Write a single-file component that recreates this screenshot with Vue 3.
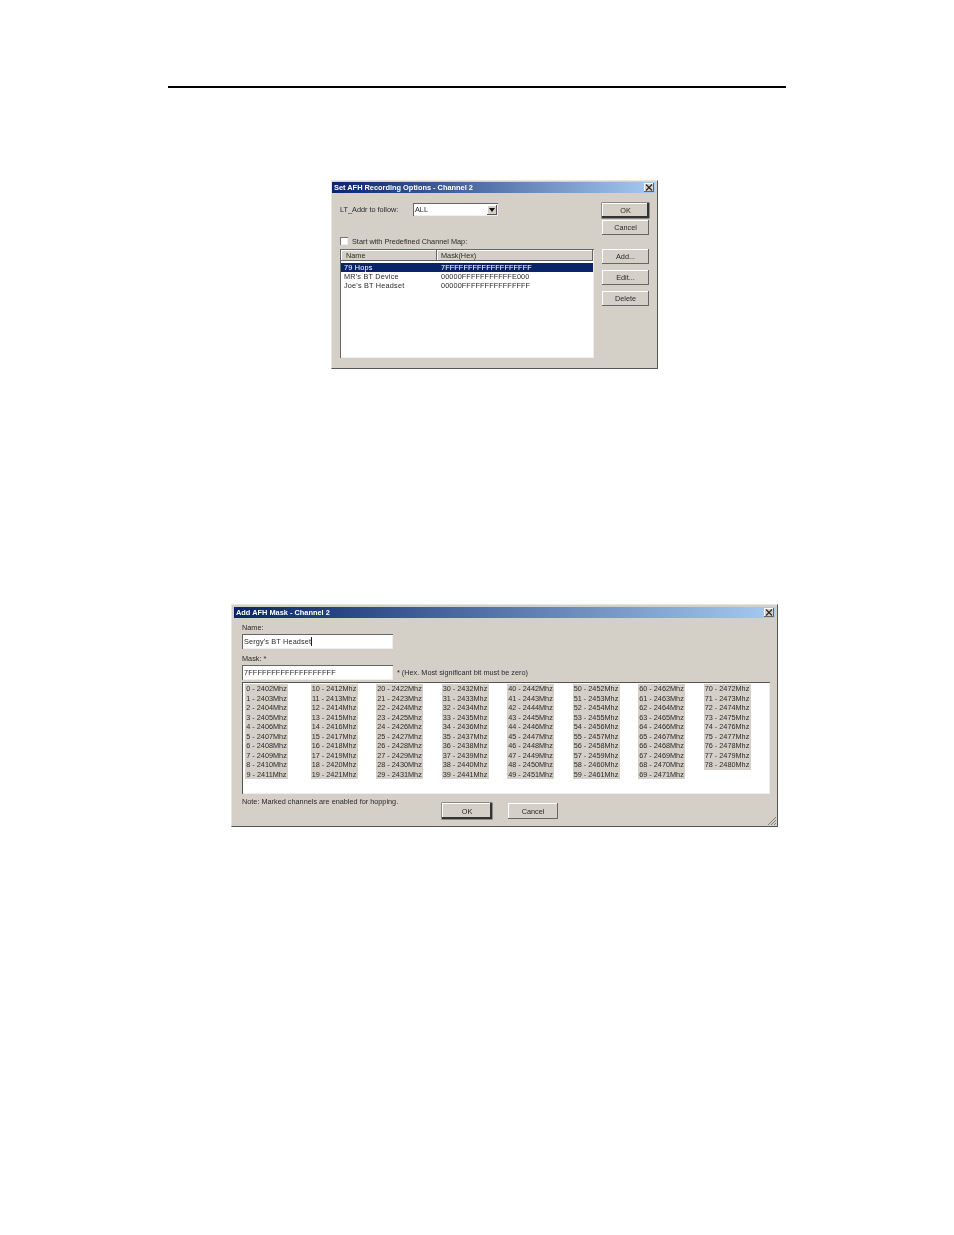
<script setup>
const hops = [
  { name: "79 Hops", mask: "7FFFFFFFFFFFFFFFFFFF", selected: true },
  { name: "MR's BT Device", mask: "00000FFFFFFFFFFFE000", selected: false },
  { name: "Joe's BT Headset", mask: "00000FFFFFFFFFFFFFFF", selected: false },
];
const columns = Array.from({ length: 8 }, (_, c) => {
  const items = [];
  for (let r = 0; r < 10; r++) {
    const n = c * 10 + r;
    if (n <= 78) items.push(`${n} - ${2402 + n}Mhz`);
  }
  return items;
});
</script>

<template>
  <div class="page">
    <div class="rule"></div>

    <section class="dlg dlg-one">
      <header class="title">
        <span>Set AFH Recording Options - Channel 2</span>
        <span class="close">
          <svg width="8" height="7" viewBox="0 0 8 7"><path d="M1 0.5L7 6.5M7 0.5L1 6.5" stroke="#222" stroke-width="1.1" fill="none" /></svg>
        </span>
      </header>
      <div class="one-body">
        <div class="one-main">
          <div class="addr-row">
            <span class="addr-label">LT_Addr to follow:</span>
            <div class="combo">
              <span class="combo-text">ALL</span>
              <span class="combo-btn">
                <svg width="6" height="4" viewBox="0 0 6 4"><path d="M0 0H6L3 4Z" fill="#111" /></svg>
              </span>
            </div>
          </div>
          <label class="check-row">
            <span class="check"></span>
            <span>Start with Predefined Channel Map:</span>
          </label>
          <div class="list">
            <div class="list-head">
              <span class="head-cell head-name">Name</span>
              <span class="head-cell head-mask">Mask(Hex)</span>
            </div>
            <div class="list-rows">
              <div v-for="h in hops" :key="h.name" class="list-row" :class="{ selected: h.selected }">
                <span class="cell-name">{{ h.name }}</span>
                <span class="cell-mask">{{ h.mask }}</span>
              </div>
            </div>
          </div>
        </div>
        <div class="one-side">
          <button class="btn btn-default">OK</button>
          <button class="btn mt-2">Cancel</button>
          <button class="btn mt-14">Add...</button>
          <button class="btn mt-6">Edit...</button>
          <button class="btn mt-6">Delete</button>
        </div>
      </div>
    </section>

    <section class="dlg dlg-two">
      <header class="title">
        <span>Add AFH Mask - Channel 2</span>
        <span class="close">
          <svg width="8" height="7" viewBox="0 0 8 7"><path d="M1 0.5L7 6.5M7 0.5L1 6.5" stroke="#222" stroke-width="1.1" fill="none" /></svg>
        </span>
      </header>
      <div class="two-body">
        <div class="field-label">Name:</div>
        <div class="input">Sergy's BT Headset<i class="caret"></i></div>
        <div class="field-label mask-label">Mask: *</div>
        <div class="mask-row">
          <div class="input">7FFFFFFFFFFFFFFFFFFF</div>
          <span class="mask-note">* (Hex. Most significant bit must be zero)</span>
        </div>
        <div class="channels">
          <div v-for="(col, i) in columns" :key="i" class="channel-col" :class="{ first: i === 0 }">
            <div v-for="item in col" :key="item" class="channel">{{ item }}</div>
          </div>
        </div>
        <div class="two-foot">
          <span class="note">Note: Marked channels are enabled for hopping.</span>
          <button class="btn btn-default btn-wide">OK</button>
          <button class="btn btn-wide">Cancel</button>
        </div>
      </div>
      <svg class="grip" width="8" height="8" viewBox="0 0 8 8">
        <path d="M8 0L0 8M8 3L3 8M8 6L6 8" stroke="#808080" stroke-width="1" fill="none" />
      </svg>
    </section>
  </div>
</template>

<style>
html, body { margin: 0; background: #fff; }
</style>

<style scoped>
.page {
  height: 1235px;
  box-sizing: border-box;
  padding-top: 86px;
  background: #fff;
  overflow: hidden;
  font-family: "Liberation Sans", Arial, sans-serif;
  font-size: 7.3px;
  color: #2a2a2a;
}
.rule { height: 2px; margin: 0 168px; background: #000; }

.dlg {
  position: relative;
  box-sizing: border-box;
  background: #d4d0c8;
  padding: 2px;
  border-top: 1px solid #e8e6e0;
  border-left: 1px solid #e8e6e0;
  border-right: 1px solid #555;
  border-bottom: 1px solid #555;
  filter: blur(0.25px);
}
.dlg-one { width: 327px; height: 189px; margin: 92px 0 0 331px; padding-top: 1px; padding-left: 0; }
.dlg-two { width: 547px; height: 223px; margin: 235px 0 0 231px; }

.title {
  height: 11px;
  display: flex;
  align-items: center;
  justify-content: space-between;
  padding: 0 1px 0 2px;
  color: #fff;
  font-weight: 700;
  font-size: 7.4px;
  background: linear-gradient(90deg, #0a246a, #a6caf0);
}
.close {
  width: 10px;
  height: 9px;
  display: flex;
  align-items: center;
  justify-content: center;
  background: #d4d0c8;
  box-shadow: inset -1px -1px 0 #666, inset 1px 1px 0 #fff;
}

.one-body { display: flex; gap: 8px; padding: 10px 0 0 8px; }
.one-main { width: 254px; }
.one-side { width: 47px; display: flex; flex-direction: column; }
.addr-row { height: 13px; display: flex; align-items: center; }
.addr-label { width: 73px; }
.combo {
  width: 85px;
  height: 13px;
  box-sizing: border-box;
  display: flex;
  align-items: center;
  justify-content: space-between;
  background: #fff;
  padding: 1px;
  box-shadow: inset 1px 1px 0 #666, inset -1px -1px 0 #eee;
}
.combo-text { padding-left: 1px; }
.combo-btn {
  width: 10px;
  height: 10px;
  display: flex;
  align-items: center;
  justify-content: center;
  background: #d4d0c8;
  box-shadow: inset -1px -1px 0 #555, inset 1px 1px 0 #fff;
}
.check-row { height: 8px; margin-top: 21px; display: flex; align-items: center; gap: 4px; }
.check {
  width: 8px;
  height: 8px;
  background: #fff;
  box-shadow: inset 1px 1px 0 #777, inset -1px -1px 0 #eee;
}
.list {
  height: 109px;
  margin-top: 4px;
  box-sizing: border-box;
  background: #fff;
  padding: 1px;
  box-shadow: inset 1px 1px 0 #666, inset -1px -1px 0 #eee;
}
.list-head { height: 11px; display: flex; }
.head-cell {
  box-sizing: border-box;
  display: flex;
  align-items: center;
  background: #d4d0c8;
  box-shadow: inset -1px -1px 0 #666, inset 1px 1px 0 #fff;
}
.head-name { width: 96px; padding-left: 5px; }
.head-mask { flex: 1; padding-left: 4px; }
.list-rows { padding-top: 2px; }
.list-row { height: 9px; display: flex; align-items: center; }
.list-row.selected { background: #0a246a; color: #fff; }
.cell-name { width: 100px; padding-left: 3px; box-sizing: border-box; letter-spacing: 0.2px; }
.cell-mask { letter-spacing: 0.1px; }

.btn {
  display: block;
  box-sizing: border-box;
  width: 47px;
  height: 15px;
  padding: 0;
  border: 0;
  font: inherit;
  color: inherit;
  background: #d4d0c8;
  box-shadow: inset -1px -1px 0 #666, inset 1px 1px 0 #fff;
}
.btn-default { box-shadow: inset -2px -2px 0 #333, inset 1px 1px 0 #fff, 0 0 0 0.5px #444; }
.mt-2 { margin-top: 2px; }
.mt-14 { margin-top: 14px; }
.mt-6 { margin-top: 6px; }

.two-body { padding: 5px 0 0 8px; }
.field-label { height: 10px; line-height: 10px; }
.mask-label { margin-top: 5px; }
.input {
  box-sizing: border-box;
  width: 151px;
  height: 15px;
  margin-top: 1px;
  padding-left: 2px;
  display: flex;
  align-items: center;
  flex: none;
  background: #fff;
  letter-spacing: 0.15px;
  box-shadow: inset 1px 1px 0 #666, inset -1px -1px 0 #eee;
}
.caret { width: 1px; height: 9px; background: #222; }
.mask-row { display: flex; align-items: center; gap: 4px; }
.mask-note { margin-top: 1px; }
.channels {
  width: 528px;
  height: 112px;
  margin-top: 2px;
  box-sizing: border-box;
  padding: 2px 0 0 3px;
  display: grid;
  grid-template-columns: repeat(8, 65.5px);
  align-items: start;
  background: #fff;
  box-shadow: inset 1px 1px 0 #555, inset -1px -1px 0 #eee;
}
.channel-col { width: 47px; background: #d4d0c8; }
.channel-col.first { width: 43px; margin-left: 0; }
.channel { height: 9.55px; line-height: 9.55px; text-align: center; white-space: nowrap; }
.two-foot { display: flex; align-items: flex-start; }
.note { width: 200px; margin-top: 3px; }
.btn-wide { width: 50px; height: 16px; margin-top: 9px; margin-right: 16px; }
.grip { position: absolute; right: 1px; bottom: 1px; }
</style>
